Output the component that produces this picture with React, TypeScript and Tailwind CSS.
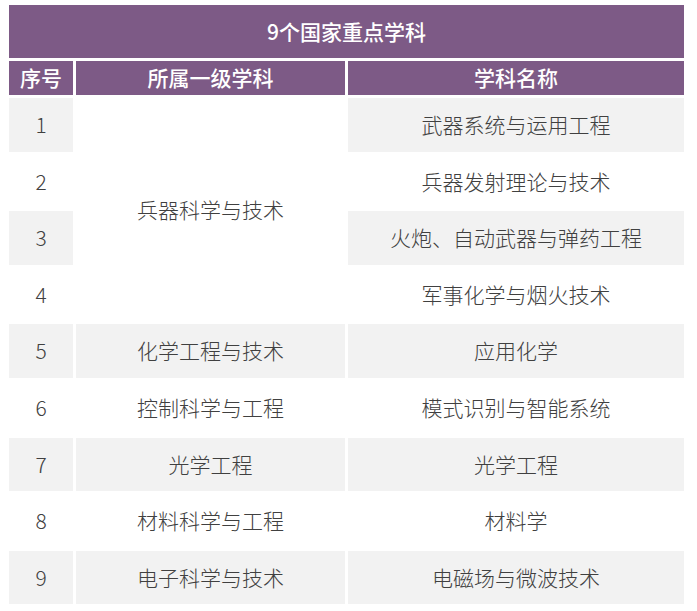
import React from "react";

const rows: { n: string; b: string; gray: boolean }[] = [
  { n: "1", b: "武器系统与运用工程", gray: true },
  { n: "2", b: "兵器发射理论与技术", gray: false },
  { n: "3", b: "火炮、自动武器与弹药工程", gray: true },
  { n: "4", b: "军事化学与烟火技术", gray: false },
];

const rest: { n: string; a: string; b: string; gray: boolean }[] = [
  { n: "5", a: "化学工程与技术", b: "应用化学", gray: true },
  { n: "6", a: "控制科学与工程", b: "模式识别与智能系统", gray: false },
  { n: "7", a: "光学工程", b: "光学工程", gray: true },
  { n: "8", a: "材料科学与工程", b: "材料学", gray: false },
  { n: "9", a: "电子科学与技术", b: "电磁场与微波技术", gray: true },
];

export default function App() {
  const cell = "flex items-center justify-center";
  const body = "text-[21px] font-light";
  return (
    <div
      className="w-[697px] h-[611px] bg-white pl-[9px] pt-[5px] text-[#404040]"
      style={{ fontFamily: '"Noto Sans CJK SC", "Noto Sans", sans-serif' }}
    >
      <div className="grid grid-cols-[64px_269px_336px] grid-rows-[53px_34px_repeat(9,53.6px)] gap-[3px] w-[675px]">
        <div className={`${cell} col-span-3 bg-[#7d5a86] text-white text-[21px] font-medium`}>
          9个国家重点学科
        </div>
        <div className={`${cell} bg-[#7d5a86] text-white text-[21px] font-medium`}>序号</div>
        <div className={`${cell} bg-[#7d5a86] text-white text-[21px] font-medium`}>所属一级学科</div>
        <div className={`${cell} bg-[#7d5a86] text-white text-[21px] font-medium`}>学科名称</div>

        {rows.map((r, i) => (
          <React.Fragment key={r.n}>
            <div
              className={`${cell} ${body} ${r.gray ? "bg-[#f2f2f2]" : "bg-white"}`}
              style={{ gridColumn: 1, gridRow: 3 + i }}
            >
              {r.n}
            </div>
            {i === 0 && (
              <div
                className={`${cell} ${body} bg-white`}
                style={{ gridColumn: 2, gridRow: "3 / span 4" }}
              >
                兵器科学与技术
              </div>
            )}
            <div
              className={`${cell} ${body} ${r.gray ? "bg-[#f2f2f2]" : "bg-white"}`}
              style={{ gridColumn: 3, gridRow: 3 + i }}
            >
              {r.b}
            </div>
          </React.Fragment>
        ))}

        {rest.map((r) => (
          <React.Fragment key={r.n}>
            <div className={`${cell} ${body} ${r.gray ? "bg-[#f2f2f2]" : "bg-white"}`}>{r.n}</div>
            <div className={`${cell} ${body} ${r.gray ? "bg-[#f2f2f2]" : "bg-white"}`}>{r.a}</div>
            <div className={`${cell} ${body} ${r.gray ? "bg-[#f2f2f2]" : "bg-white"}`}>{r.b}</div>
          </React.Fragment>
        ))}
      </div>
    </div>
  );
}
